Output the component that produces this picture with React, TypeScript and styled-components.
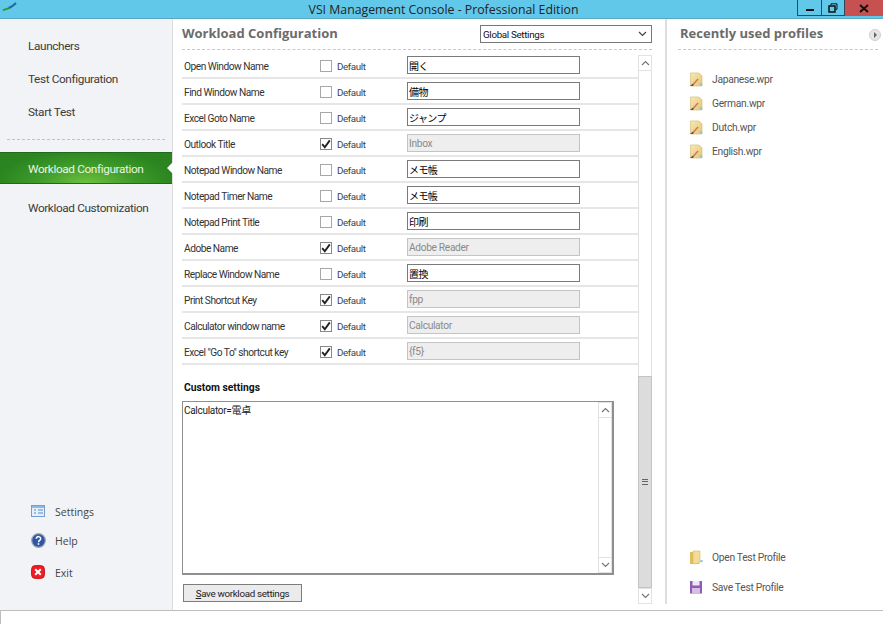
import React from "react";
import styled, { createGlobalStyle } from "styled-components";

const Global = createGlobalStyle`
  html, body { margin: 0; padding: 0; background: #fff; }
  * { box-sizing: border-box; }
`;

const UI = `"Open Sans", "Noto Sans CJK JP", sans-serif`;
const FORM = `Roboto, "Noto Sans CJK JP", sans-serif`;

const Window = styled.div`
  width: 883px; height: 624px; display: flex; flex-direction: column; overflow: hidden;
  font-family: ${FORM}; background: #fff; color: #333;
`;
const TitleBar = styled.header`
  height: 19px; flex: none; background: #62c8ea; position: relative; display: flex;
  justify-content: center; align-items: center; color: #222; font: 12.3px/19px ${UI};
  border-bottom: 1px solid #5aa9c4; padding-left: 4px;
`;
const AppLogo = styled.svg`position: absolute; left: 2px; top: 2px;`;
const Controls = styled.div`position: absolute; right: 0; top: 0; display: flex; height: 16px;`;
const MinBtn = styled.div<{ $w: number }>`
  width: ${p => p.$w}px; height: 16px; border: 1px solid #2b4a5c; border-top: 0; border-right: 0;
  display: flex; align-items: center; justify-content: center;
`;
const CloseBtn = styled.div`
  width: 39px; height: 16px; background: #c75050; display: flex; align-items: center; justify-content: center;
  border-left: 1px solid #2b4a5c;
`;
const Main = styled.div`flex: 1; display: flex; min-height: 0;`;
const Sidebar = styled.nav`
  width: 173px; flex: none; background: #f2f3f6; border-right: 1px solid #dcdcdc;
  display: flex; flex-direction: column; padding-top: 10px;
`;
const NavItem = styled.div`
  height: 33px; padding-left: 28px; display: flex; align-items: center; font: 11.8px ${FORM}; letter-spacing: -0.38px; color: #3c3c3c;
`;
const NavRule = styled.div`margin: 11px 7px 12px; border-top: 1px dashed #c2c2c2;`;
const ActiveNav = styled.div`
  height: 32px; padding: 1px 0 0 28px; display: flex; align-items: center; font: 11.8px ${FORM}; letter-spacing: -0.38px; color: #e8f5e0;
  background: radial-gradient(ellipse 90px 34px at 50% 100%, #6cc23e 0%, #3d9a2a 55%, #2b8420 100%);
  border-top: 1px solid #1f6a1c; border-bottom: 1px solid #1f6a1c; position: relative; margin-bottom: 7px;
`;
const Notch = styled.div`
  position: absolute; right: -1px; top: 9px; width: 0; height: 0; border: 6px solid transparent; border-left: 0;
  border-right-color: #fff;
`;
const SideFooter = styled.div`margin-top: auto; display: flex; flex-direction: column; padding-bottom: 21px;`;
const FooterItem = styled.div<{ $h: number }>`
  height: ${p => p.$h}px; display: flex; align-items: center; padding-left: 31px; gap: 9px; font: 10.5px ${UI}; color: #444;
`;
const IconBox = styled.span`width: 15px; height: 15px; display: inline-flex; flex: none;`;

const Center = styled.section`
  width: 492px; flex: none; display: flex; flex-direction: column; padding: 0 13px 0 9px;
`;
const CenterHead = styled.div`
  height: 31px; flex: none; display: flex; align-items: flex-start; justify-content: space-between;
  border-bottom: 1px dashed #c8c8c8; padding-top: 5px;
`;
const HeadTitle = styled.h1`margin: 0; font: 700 13px/18px ${UI}; color: #6b6b6b;`;
const Combo = styled.div`
  width: 172px; height: 18px; border: 1px solid #777; margin-top: 1px; display: flex; align-items: center;
  justify-content: space-between; padding: 0 4px 0 2px; font: 9.8px ${FORM}; letter-spacing: -0.33px; color: #111; background: #fff;
`;
const Body = styled.div`flex: 1; display: flex; min-height: 0;`;
const Form = styled.div`width: 456px; flex: none; padding-top: 3px; display: flex; flex-direction: column;`;
const Row = styled.div`
  height: 26px; display: flex; align-items: center; border-bottom: 2px solid #e6e6e6;
  padding-left: 2px; font: 10.2px ${FORM}; color: #333;
`;
const RowName = styled.div`width: 136px; flex: none; margin-top: 2px; letter-spacing: -0.5px;`;
const Check = styled.span<{ $on?: boolean }>`
  width: 12px; height: 12px; border: 1px solid ${p => (p.$on ? "#888" : "#a8a8a8")}; background: #fff; display: inline-flex;
  align-items: center; justify-content: center; flex: none; margin-top: 1px;
`;
const DefaultLabel = styled.span`
  margin-left: 5px; width: 70px; flex: none; font-size: 9.8px; letter-spacing: -0.4px; margin-top: 2px; color: #444;
`;
const Field = styled.input<{ disabled?: boolean }>`
  width: 173px; height: 18px; margin: 0; padding: 0 0 0 1px; border: 1px solid #7a7a7a; outline: 0; border-radius: 0;
  font: 10px ${FORM}; letter-spacing: -0.6px; color: #000; background: #fff;
  &:disabled { background: #eeeeee; border-color: #c4c4c4; color: #8a8a8a; font-size: 10.2px; letter-spacing: -0.33px; }
`;
const CustomLabel = styled.div`margin: 16px 0 6px 2px; font: 700 10.3px/14px ${FORM}; color: #111;`;
const TextBox = styled.div`
  width: 432px; height: 174px; border: 1px solid #8f8f8f; border-width: 1px 2px 2px 1px; display: flex; background: #fff;
`;
const TextValue = styled.div`flex: 1; padding: 2px 1px; font: 10px/13px ${FORM}; letter-spacing: -0.3px; color: #222;`;
const SaveBtn = styled.button`
  width: 119px; height: 18px; margin: 9px 0 0 1px; padding: 0; background: #ebebeb; border: 1px solid #7d7d7d; border-radius: 0;
  font: 9.8px ${FORM}; letter-spacing: -0.33px; color: #222; text-align: center;
`;
const Scroll = styled.div`
  width: 14px; flex: none; display: flex; flex-direction: column; border: 1px solid #e2e2e2; background: #fff;
`;
const MainScroll = styled(Scroll)`height: 549px; margin-top: 5px;`;
const Arrow = styled.div`
  height: 15px; flex: none; display: flex; align-items: center; justify-content: center; background: #fff;
  &:first-child { border-bottom: 1px solid #e2e2e2; }
  &:last-child { border-top: 1px solid #e2e2e2; }
`;
const Track = styled.div`flex: 1;`;
const Thumb = styled.div`
  height: 212px; flex: none; background: #dcdcdc; border: 1px solid #c4c4c4; margin: 0 -1px;
  display: flex; align-items: center; justify-content: center;
`;
const Grip = styled.div`width: 6px; height: 6px; border-top: 1px solid #666; border-bottom: 1px solid #666; position: relative;
  &::after { content: ""; position: absolute; left: 0; right: 0; top: 1px; border-top: 1px solid #666; }
`;
const Right = styled.aside`
  flex: 1; margin-bottom: 6px; border-left: 2px solid #dedede; display: flex; flex-direction: column; padding: 0 5px 0 11px;
`;
const RightHead = styled.div`
  height: 31px; flex: none; display: flex; align-items: flex-start; justify-content: space-between; border-bottom: 1px dashed #c8c8c8;
  padding: 5px 0 0 2px;
`;
const RoundBtn = styled.span`
  width: 12px; height: 12px; border-radius: 50%; background: #e6e6e6; border: 1px solid #d0d0d0; margin-top: 5px; margin-right: -3px;
  display: flex; align-items: center; justify-content: center;
`;
const Recents = styled.ul`list-style: none; margin: 17px 0 0 0; padding: 0 0 0 11px; display: flex; flex-direction: column;`;
const Item = styled.li<{ $h: number }>`
  height: ${p => p.$h}px; display: flex; align-items: center; gap: 9px; font: 10.3px ${FORM}; letter-spacing: -0.3px; color: #555;
`;
const RightFoot = styled.ul`list-style: none; margin: auto 0 0 0; padding: 0 0 2px 11px; display: flex; flex-direction: column;`;
const Status = styled.footer`height: 14px; flex: none; border-top: 1px solid #bdbdbd; border-left: 1px solid #bdbdbd; background: #fff;`;

const Chev = ({ up, c = "#777" }: { up?: boolean; c?: string }) => (
  <svg width="9" height="6" viewBox="0 0 9 6" fill="none"><path d={up ? "M1 5l3.5-3.5L8 5" : "M1 1l3.5 3.5L8 1"} stroke={c} strokeWidth="1.2" /></svg>
);
const Tick = () => (
  <svg width="10" height="10" viewBox="0 0 10 10" fill="none"><path d="M1.2 5.2l2.6 3L8.8 1.4" stroke="#222" strokeWidth="1.9" /></svg>
);
const Wpr = () => (
  <svg width="14" height="15" viewBox="0 0 14 15">
    <defs><linearGradient id="wp" x1="0" y1="0" x2="1" y2="1"><stop offset="0" stopColor="#f7e8b4" /><stop offset="1" stopColor="#e4c675" /></linearGradient></defs>
    <path d="M1.5 1h8.5l3 3v10H1.5z" fill="url(#wp)" stroke="#d9bd7c" strokeWidth=".7" />
    <path d="M4 11.5l4.5-5 1 .9-4.5 5z" fill="#d9705a" />
    <path d="M1 14l3-2.5.9.9-.9 1.6z" fill="#555" />
    <circle cx="12" cy="12.5" r="1.4" fill="#8cc6e8" />
  </svg>
);

type R = { name: string; on?: boolean; value: string };
const rows: R[] = [
  { name: "Open Window Name", value: "開く" },
  { name: "Find Window Name", value: "備物" },
  { name: "Excel Goto Name", value: "ジャンプ" },
  { name: "Outlook Title", on: true, value: "Inbox" },
  { name: "Notepad Window Name", value: "メモ帳" },
  { name: "Notepad Timer Name", value: "メモ帳" },
  { name: "Notepad Print Title", value: "印刷" },
  { name: "Adobe Name", on: true, value: "Adobe Reader" },
  { name: "Replace Window Name", value: "置換" },
  { name: "Print Shortcut Key", on: true, value: "fpp" },
  { name: "Calculator window name", on: true, value: "Calculator" },
  { name: 'Excel "Go To" shortcut key', on: true, value: "{f5}" },
];

export default function App() {
  return (
    <Window>
      <Global />
      <TitleBar>
        <AppLogo width="15" height="10" viewBox="0 0 15 10">
          <path d="M1 8.5C4 6 6 8 8 5" stroke="#2f9a3a" strokeWidth="2" fill="none" />
          <path d="M7 6c2-1 4-2 7-5" stroke="#1f6aa0" strokeWidth="2" fill="none" />
        </AppLogo>
        VSI Management Console - Professional Edition
        <Controls>
          <MinBtn $w={24}><svg width="10" height="8" viewBox="0 0 10 8"><rect x="1" y="5" width="8" height="2" fill="#111" /></svg></MinBtn>
          <MinBtn $w={23}><svg width="10" height="10" viewBox="0 0 10 10" fill="none"><path d="M3 2.5V.8h6v5.5H7.5" stroke="#111" /><rect x="1" y="3" width="6" height="6" stroke="#111" strokeWidth="1.5" /></svg></MinBtn>
          <CloseBtn><svg width="10" height="9" viewBox="0 0 10 9"><path d="M1 1l8 7M9 1L1 8" stroke="#111" strokeWidth="2" /></svg></CloseBtn>
        </Controls>
      </TitleBar>
      <Main>
        <Sidebar>
          <NavItem>Launchers</NavItem>
          <NavItem>Test Configuration</NavItem>
          <NavItem>Start Test</NavItem>
          <NavRule />
          <ActiveNav>Workload Configuration<Notch /></ActiveNav>
          <NavItem>Workload Customization</NavItem>
          <SideFooter>
            <FooterItem $h={26}>
              <IconBox>
                <svg width="14" height="13" viewBox="0 0 14 13"><rect x=".5" y=".5" width="13" height="11" fill="#e6f0fb" stroke="#6f9fd8" /><rect x="1" y="1" width="12" height="2" fill="#8db8ea" /><path d="M3 5h2M3 8h2M7 5h5M7 8h5" stroke="#5b86bb" /></svg>
              </IconBox>
              Settings
            </FooterItem>
            <FooterItem $h={31}>
              <IconBox>
                <svg width="15" height="15" viewBox="0 0 15 15"><circle cx="7.5" cy="7.5" r="6.8" fill="#2f55a4" stroke="#9aa3b5" strokeWidth="1.2" /><path d="M5.3 5.8c0-3 4.6-2.8 4.4 0 0 1.7-2.2 1.6-2.2 3.4" stroke="#fff" strokeWidth="1.5" fill="none" /><rect x="6.7" y="10.2" width="1.6" height="1.6" fill="#fff" /></svg>
              </IconBox>
              Help
            </FooterItem>
            <FooterItem $h={33}>
              <IconBox>
                <svg width="14" height="14" viewBox="0 0 14 14"><rect x=".5" y=".5" width="13" height="13" rx="4" fill="#ee1c25" stroke="#d01a1f" /><path d="M4.2 4.2l5.6 5.6M9.8 4.2L4.2 9.8" stroke="#fff" strokeWidth="2" /></svg>
              </IconBox>
              Exit
            </FooterItem>
          </SideFooter>
        </Sidebar>
        <Center>
          <CenterHead>
            <HeadTitle>Workload Configuration</HeadTitle>
            <Combo>Global Settings<Chev c="#444" /></Combo>
          </CenterHead>
          <Body>
            <Form>
              {rows.map(r => (
                <Row key={r.name}>
                  <RowName>{r.name}</RowName>
                  <Check $on={r.on}>{r.on && <Tick />}</Check>
                  <DefaultLabel>Default</DefaultLabel>
                  <Field readOnly disabled={r.on} value={r.value} />
                </Row>
              ))}
              <CustomLabel>Custom settings</CustomLabel>
              <TextBox>
                <TextValue>Calculator=電卓</TextValue>
                <Scroll>
                  <Arrow><Chev up /></Arrow>
                  <Track />
                  <Arrow><Chev /></Arrow>
                </Scroll>
              </TextBox>
              <SaveBtn><u>S</u>ave workload settings</SaveBtn>
            </Form>
            <MainScroll>
              <Arrow><Chev up /></Arrow>
              <Track />
              <Thumb><Grip /></Thumb>
              <Arrow><Chev /></Arrow>
            </MainScroll>
          </Body>
        </Center>
        <Right>
          <RightHead>
            <HeadTitle>Recently used profiles</HeadTitle>
            <RoundBtn><svg width="5" height="6" viewBox="0 0 5 6"><path d="M1 0l3 3-3 3z" fill="#666" /></svg></RoundBtn>
          </RightHead>
          <Recents>
            {["Japanese.wpr", "German.wpr", "Dutch.wpr", "English.wpr"].map(n => (
              <Item $h={24} key={n}><Wpr />{n}</Item>
            ))}
          </Recents>
          <RightFoot>
            <Item $h={30}>
              <svg width="14" height="15" viewBox="0 0 14 15"><path d="M1 2h5l1 1h3v11H1z" fill="#e2bd5e" /><path d="M4 1h7v12l-7 1z" fill="#f3dc95" stroke="#d9b860" strokeWidth=".6" /><circle cx="12.5" cy="11" r="1.3" fill="#8cc6e8" /></svg>
              Open Test Profile
            </Item>
            <Item $h={30}>
              <svg width="14" height="14" viewBox="0 0 14 14"><path d="M1 1h12v12.5H1z" fill="#8e5cb5" /><rect x="3.5" y="1" width="7" height="4.5" fill="#efe7f5" /><rect x="3" y="8" width="8" height="5.5" fill="#d6bfe6" /></svg>
              Save Test Profile
            </Item>
          </RightFoot>
        </Right>
      </Main>
      <Status />
    </Window>
  );
}
